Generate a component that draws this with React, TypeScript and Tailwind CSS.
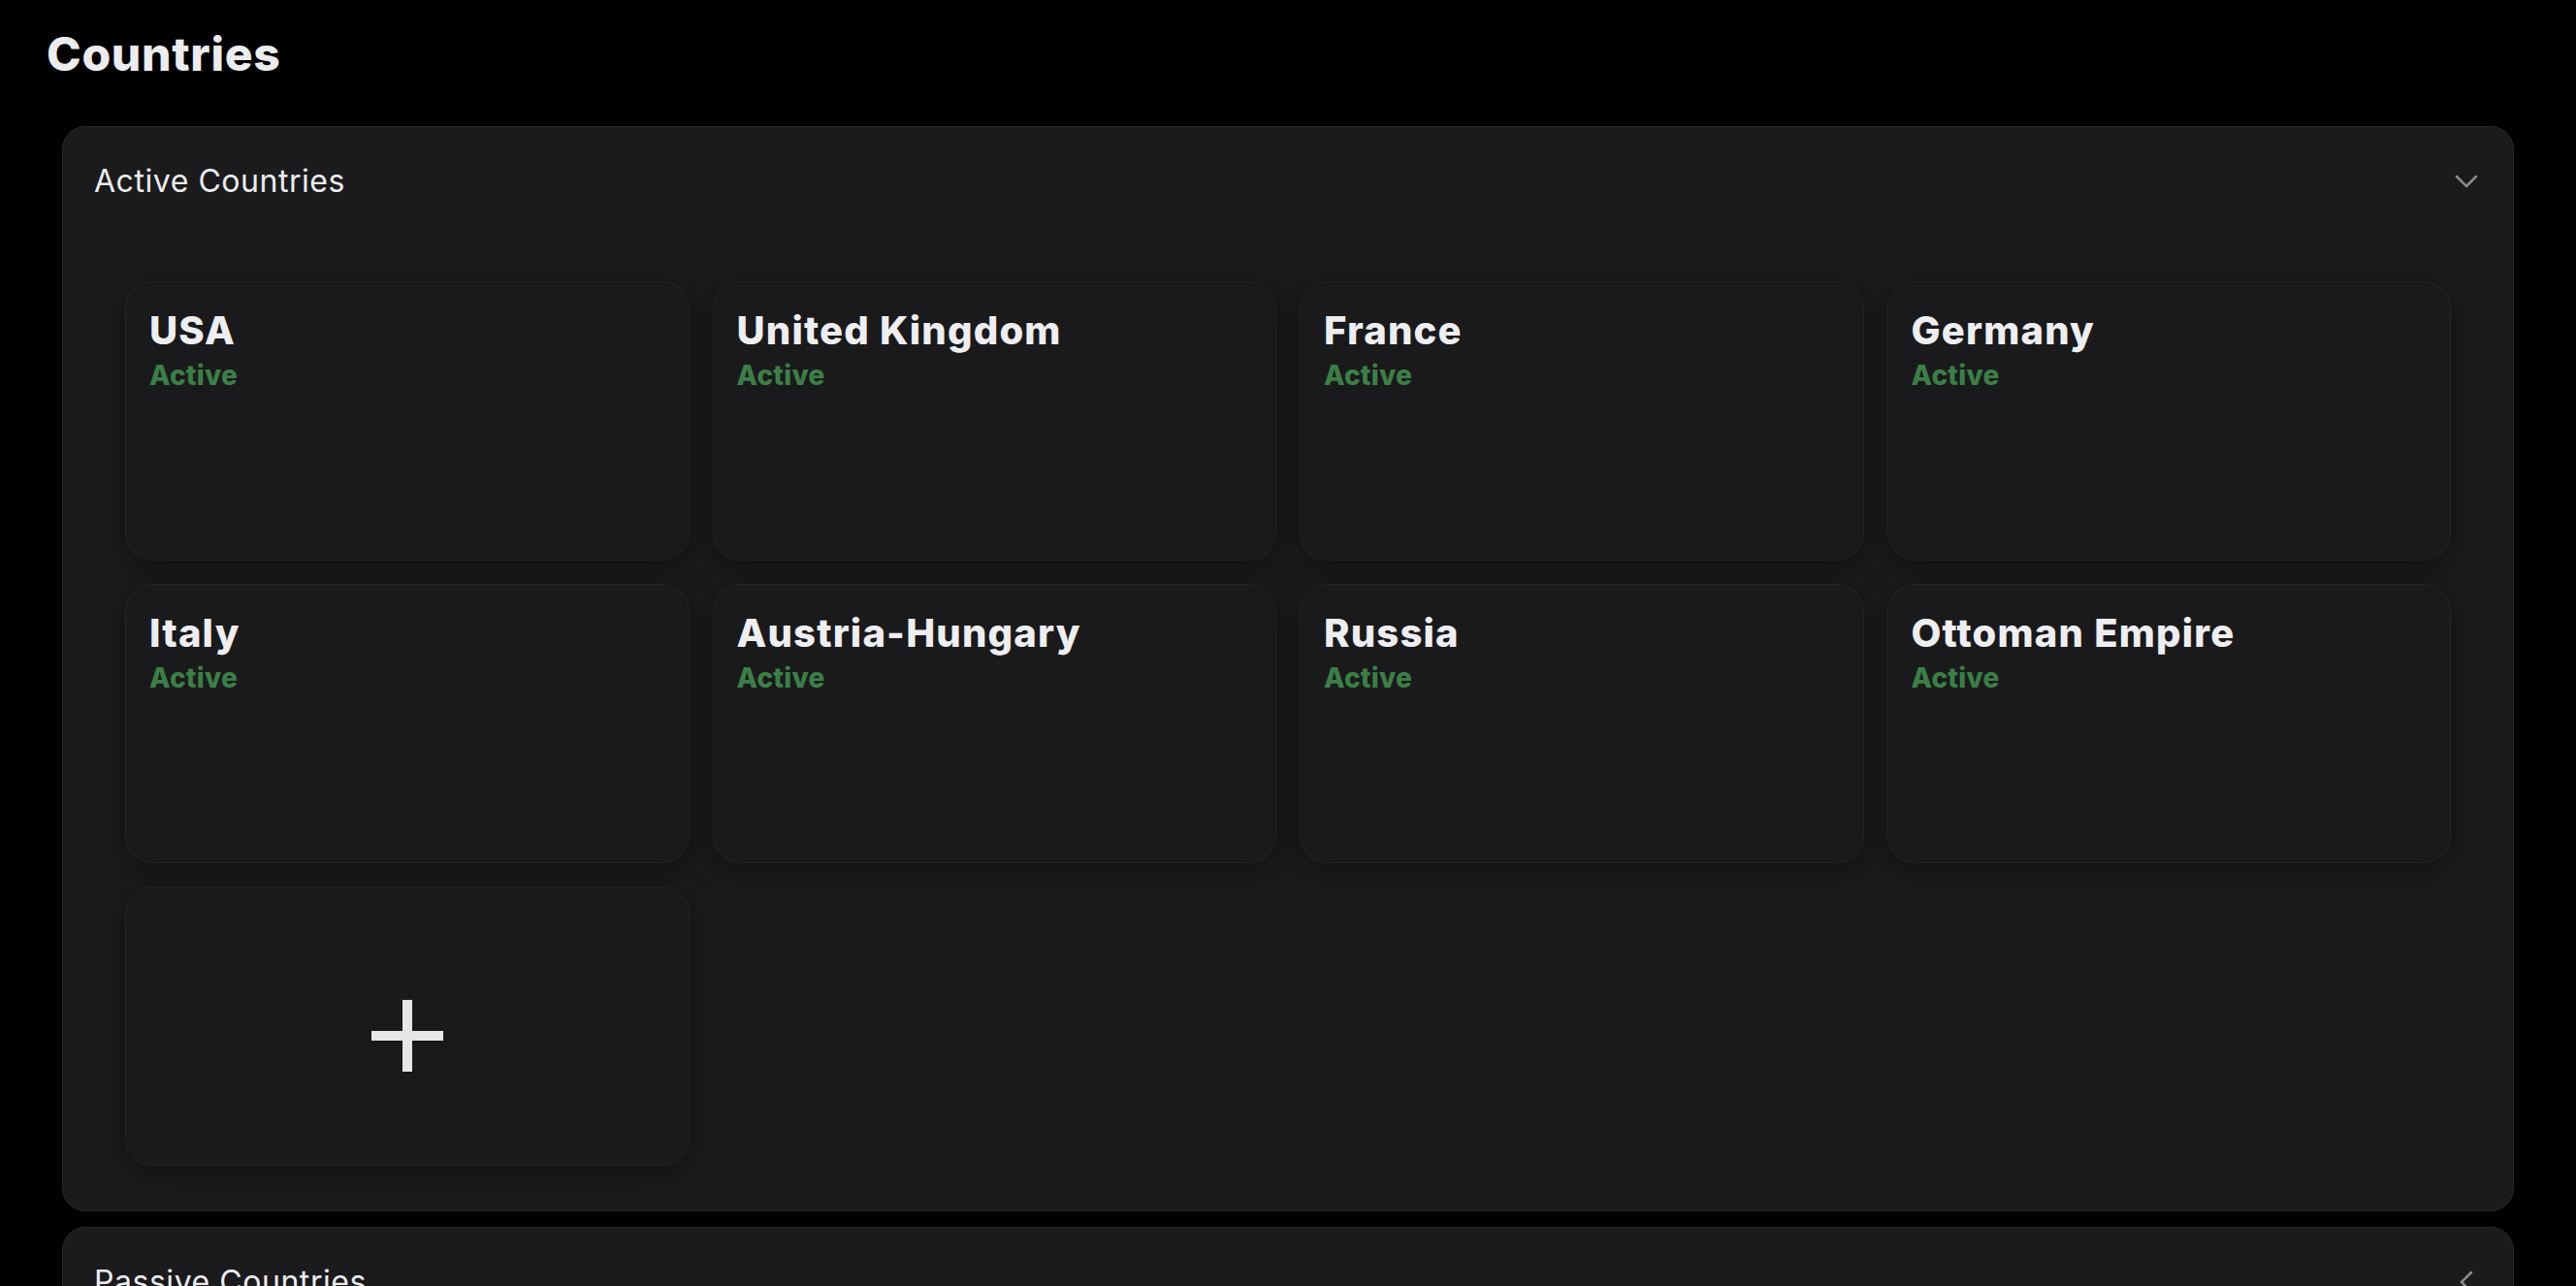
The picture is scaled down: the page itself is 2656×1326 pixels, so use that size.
import { ChevronDown, ChevronLeft } from "lucide-react"

type Country = { name: string; status: string }

const active: Country[] = [
  { name: "USA", status: "Active" },
  { name: "United Kingdom", status: "Active" },
  { name: "France", status: "Active" },
  { name: "Germany", status: "Active" },
  { name: "Italy", status: "Active" },
  { name: "Austria-Hungary", status: "Active" },
  { name: "Russia", status: "Active" },
  { name: "Ottoman Empire", status: "Active" },
]

function CountryCard({ country }: { country: Country }) {
  return (
    <div className="h-[288px] rounded-[28px] border border-[#242427] bg-[#1a1a1c] px-6 pt-6 shadow-[0_8px_32px_rgba(0,0,0,0.35)]">
      <div className="text-[40px] font-extrabold leading-[52px] tracking-[0.03em] text-[#eeeef0]">
        {country.name}
      </div>
      <div className="text-[28px] font-extrabold leading-[40px] tracking-[0.01em] text-[#3b7f46]">
        {country.status}
      </div>
    </div>
  )
}

function AddCard() {
  return (
    <button className="flex h-[288px] items-center justify-center rounded-[28px] border border-[#242427] bg-[#1a1a1c] pt-5 shadow-[0_8px_32px_rgba(0,0,0,0.35)]">
      <svg width="74" height="74" viewBox="0 0 74 74" fill="#e6e6e8">
        <rect x="32" y="0" width="10" height="74" />
        <rect x="0" y="32" width="74" height="10" />
      </svg>
    </button>
  )
}

function Panel({
  title,
  open,
  children,
}: {
  title: string
  open?: boolean
  children?: React.ReactNode
}) {
  return (
    <section className="rounded-[24px] border border-[#27272a] bg-[#1b1b1d]">
      <div className="flex items-center justify-between py-8 pl-8 pr-[28px]">
        <h2 className="text-[32px] leading-[48px] tracking-[0.017em] text-[#ececee]">
          {title}
        </h2>
        {open ? (
          <ChevronDown size={40} strokeWidth={1.5} className="text-[#8b8b90]" />
        ) : (
          <ChevronLeft size={40} strokeWidth={1.5} className="text-[#8b8b90]" />
        )}
      </div>
      {open && <div className="px-16 pb-[46px] pt-[47px]">{children}</div>}
    </section>
  )
}

export default function App() {
  return (
    <div
      className="min-h-screen bg-black pb-16"
      style={{ fontFamily: "Inter, 'Noto Sans', sans-serif" }}
    >
      <h1 className="px-12 pt-6 text-[48px] font-extrabold leading-[64px] tracking-[0.015em] text-[#ececee]">
        Countries
      </h1>
      <div className="mx-16 mt-[42px] flex flex-col gap-4">
        <Panel title="Active Countries" open>
          <div className="grid grid-cols-4 gap-6">
            {active.map((c) => (
              <CountryCard key={c.name} country={c} />
            ))}
            <AddCard />
          </div>
        </Panel>
        <Panel title="Passive Countries" />
      </div>
    </div>
  )
}
